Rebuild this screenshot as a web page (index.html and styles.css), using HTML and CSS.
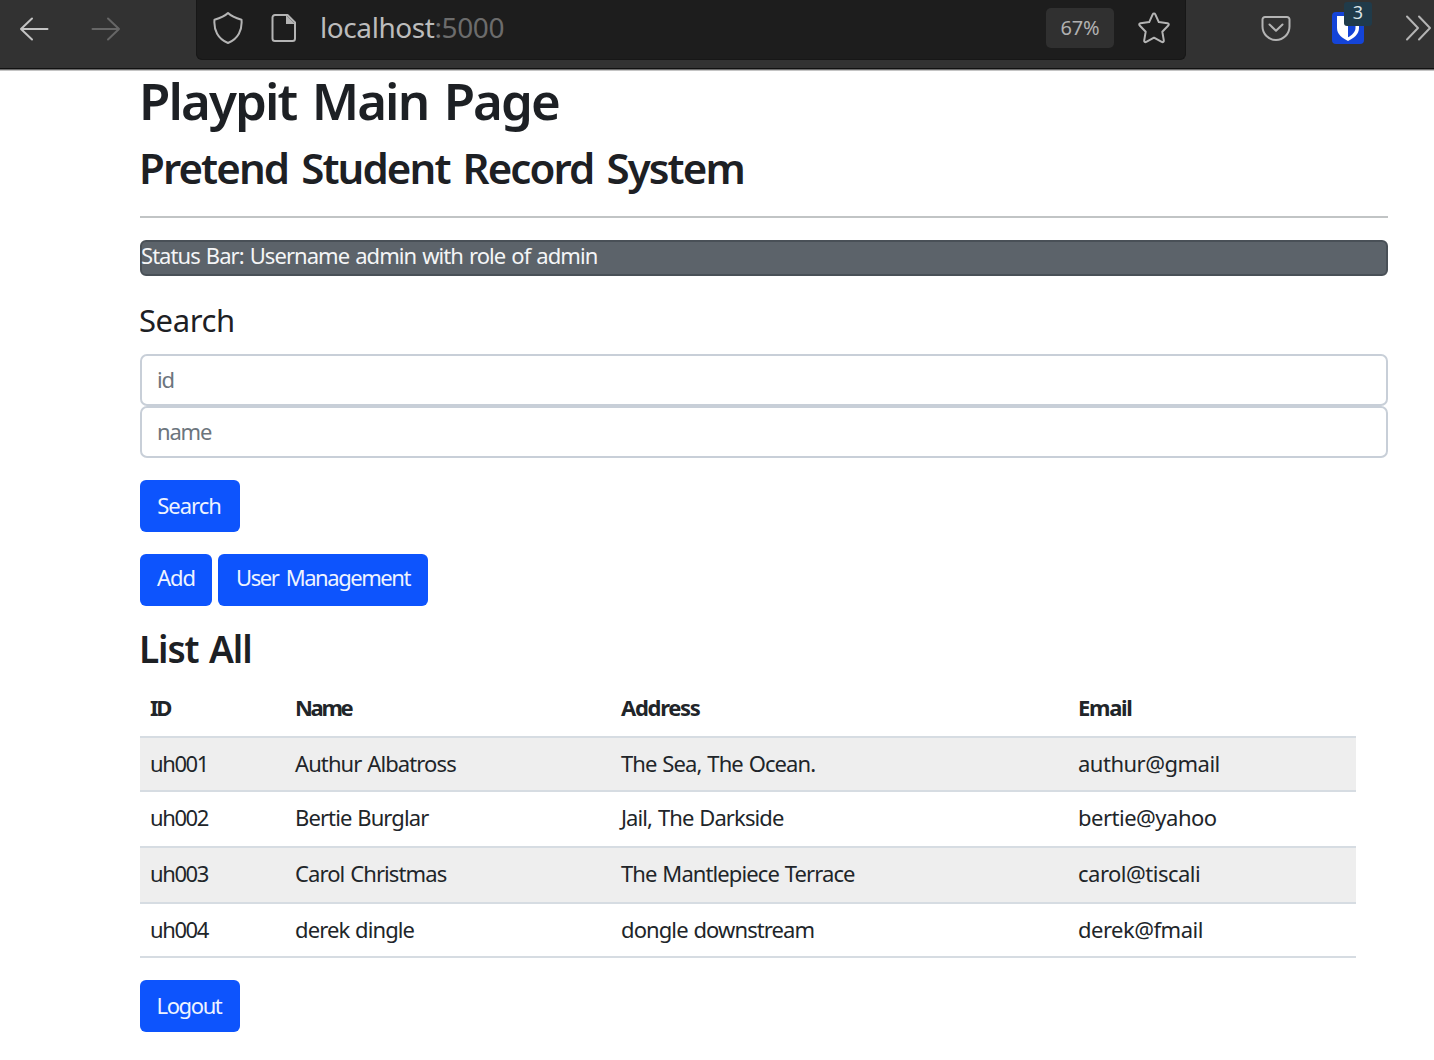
FILE: index.html
```html
<!DOCTYPE html>
<html lang="en">
<head>
<meta charset="utf-8">
<title>Playpit Main Page</title>
<link rel="stylesheet" href="styles.css">
</head>
<body>
<header class="toolbar">
  <svg class="ic back" width="30" height="26" viewBox="0 0 30 26"><path d="M28.500 13H2M13 2.500 2 13l11 10.500"/></svg>
  <svg class="ic fwd" width="30" height="26" viewBox="0 0 30 26"><path d="M1.500 13H28M17 2.500 28 13 17 23.500"/></svg>
  <div class="urlbar">
    <svg class="ic shield" width="30" height="34" viewBox="0 0 30 34"><path d="M15 2c3.500 3.500 7.500 5 13.500 6.700C29.500 19 25 28 15 32 5 28 .5 19 1.500 8.700 7.500 7 11.500 5.500 15 2Z"/></svg>
    <svg class="ic page" width="26" height="30" viewBox="0 0 26 30"><path d="M4 2h12.500L24 9.500V25.500a2.500 2.500 0 0 1-2.500 2.500H4A2.500 2.500 0 0 1 1.500 25.500v-21A2.500 2.500 0 0 1 4 2Z"/><path class="fold" d="M15 2v9h9Z"/></svg>
    <span class="url">localhost<span class="port">:5000</span></span>
    <span class="zoom">67%</span>
    <svg class="ic star" width="34" height="34" viewBox="0 0 34 34"><path d="M17 2.500c.6 0 1 .3 1.300.9l3.500 7.700 8.700 1.100c1.300.2 1.700 1.400.8 2.300l-6 6.200 1.500 8.700c.2 1.300-.9 2.100-2.100 1.500L17 26.700l-7.700 4.200c-1.200.6-2.300-.2-2.100-1.500l1.500-8.700-6-6.200c-.9-.9-.5-2.100.8-2.300l8.700-1.100 3.500-7.700c.3-.6.7-.9 1.300-.9Z"/></svg>
  </div>
  <svg class="ic pocket" width="30" height="28" viewBox="0 0 30 28"><path d="M4 3h22a2.500 2.500 0 0 1 2.500 2.500V12.500a13.500 13.500 0 0 1-27 0V5.500A2.500 2.500 0 0 1 4 3Z"/><path d="m8.500 10.500 6.500 6.300 6.500-6.300"/></svg>
  <div class="ext">
    <svg width="32" height="32" viewBox="0 0 32 32"><rect width="32" height="32" rx="4" fill="#1444d8"/><path d="M5 4h22v12c0 6-5 10-11 13C10 26 5 22 5 16Z" fill="#fff"/><path d="M16 7.500h7.500V16c0 4-3.500 7-7.500 9.300Z" fill="#1444d8"/></svg>
    <span class="badge">3</span>
  </div>
  <svg class="ic more" width="28" height="26" viewBox="0 0 28 26"><path d="M2 1.500 13 13 2 24.500M14 1.500 25 13 14 24.500"/></svg>
</header>
<main class="page-body">
  <h1>Playpit Main Page</h1>
  <h2 class="subtitle">Pretend Student Record System</h2>
  <hr>
  <div class="status">Status Bar: Username admin with role of admin</div>
  <h3>Search</h3>
  <form>
    <input type="text" placeholder="id">
    <input type="text" placeholder="name">
    <button type="button" class="btn search">Search</button>
  </form>
  <div class="actions">
    <button type="button" class="btn add">Add</button>
    <button type="button" class="btn users">User Management</button>
  </div>
  <h2 class="list-title">List All</h2>
  <table>
    <colgroup><col class="c1"><col class="c2"><col class="c3"><col class="c4"></colgroup>
    <thead><tr><th>ID</th><th>Name</th><th>Address</th><th>Email</th></tr></thead>
    <tbody>
      <tr class="short"><td>uh001</td><td>Authur Albatross</td><td>The Sea, The Ocean.</td><td>authur@gmail</td></tr>
      <tr><td>uh002</td><td>Bertie Burglar</td><td>Jail, The Darkside</td><td>bertie@yahoo</td></tr>
      <tr><td>uh003</td><td>Carol Christmas</td><td>The Mantlepiece Terrace</td><td>carol@tiscali</td></tr>
      <tr class="short"><td>uh004</td><td>derek dingle</td><td>dongle downstream</td><td>derek@fmail</td></tr>
    </tbody>
  </table>
  <button type="button" class="btn logout">Logout</button>
</main>
</body>
</html>
```

FILE: styles.css
```css
*{box-sizing:border-box}
body{margin:0;height:1060px;overflow:hidden;background:#fff;color:#212529;font:22px/30px "Noto Sans",sans-serif;letter-spacing:-.9px;word-spacing:1px}
h1,h2,h3{margin:0;color:#1d2024}

.toolbar{display:flex;align-items:flex-start;height:71px;background:#323232;border-bottom:1px solid #c4c4c4;box-shadow:inset 0 -1px #6a6a6a,inset 0 -2px #111}
.ic{flex:none;fill:none;stroke:#b4b4b4;stroke-width:2;stroke-linecap:round;stroke-linejoin:round}
.back{margin:16px 0 0 19px;stroke:#c4c4c4}
.fwd{margin:16px 0 0 42px;stroke:#666}
.urlbar{display:flex;align-items:flex-start;width:990px;height:60px;margin-left:76px;margin-right:-1px;transform:none;margin-left:75px;background:#1d1d1d;border:1px solid #171717;border-top:0;border-radius:0 0 6px 6px}
.shield{margin:11px 0 0 16px}
.page{margin:13px 0 0 28px}
.fold{fill:#b4b4b4;stroke:none}
.url{margin:7px 0 0 23px;font-size:28px;line-height:40px;letter-spacing:-.42px;color:#bcbcbc}
.port{color:#6c6c6c}
.zoom{width:68px;height:40px;margin:8px 0 0 auto;border-radius:5px;background:#303030;color:#b0b0b0;font-size:20px;line-height:40px;text-align:center;letter-spacing:-.2px}
.star{margin:11px 14px 0 23px}
.pocket{margin:14px 0 0 76px}
.ext{position:relative;width:32px;height:32px;margin:12px 0 0 41px}
.ext svg{display:block}
.badge{position:absolute;left:12px;top:-10px;width:28px;height:24px;border-radius:3px;background:#203b4a;color:#dce3e6;font-size:18px;line-height:20px;text-align:center;letter-spacing:0}
.more{margin:15px 0 0 41px}

.page-body{width:1248px;margin:-1px 0 0 140px}
h1{height:60px;font-size:51px;line-height:60px;font-weight:600;letter-spacing:-1.900px;word-spacing:4px;text-indent:-1px}
.subtitle{height:52px;margin-top:11px;font-size:42px;line-height:54px;font-weight:600;letter-spacing:-1.900px;word-spacing:4px;text-indent:-1px}
hr{height:2px;margin:23px 0 22px;border:0;background:#c1c4c5}
.status{height:36px;border:2px solid #495057;border-radius:6px;background:#5c636a;color:#f4f5f6;line-height:27px;letter-spacing:-.950px;word-spacing:1.300px;text-indent:-1px}
h3{margin-top:25px;height:38px;font-size:31px;line-height:38px;font-weight:400;letter-spacing:-.4px;text-indent:-1px}
form{display:flex;flex-direction:column;align-items:flex-start;margin-top:15px}
input{width:100%;height:52px;padding:0 15px 2px;border:2px solid #c8cfd8;border-radius:7px;background:#fff;font:inherit;letter-spacing:-1.200px}
input::placeholder{color:#6c757d;opacity:1}
.btn{display:block;height:52px;padding:0 0 2px;border:0;border-radius:6px;background:#0d54fd;color:#eef3ff;font:inherit;letter-spacing:-1px;text-align:center}
.search,.logout{width:100px}
.search{margin-top:22px;padding-right:2px}
.logout{letter-spacing:-1.400px;padding-right:2px}
.actions{display:flex;gap:6px;margin-top:22px}
.actions .btn{padding-bottom:6px}
.add{width:72px}
.users{width:210px;letter-spacing:-1.450px;word-spacing:3px}
.list-title{margin-top:20px;height:44px;font-size:37px;line-height:45px;font-weight:600;letter-spacing:-1.100px;word-spacing:2px;text-indent:-1px}
table{width:1216px;margin:10px 0 22px;border-collapse:separate;border-spacing:0;table-layout:fixed}
.c1{width:145px}
.c2{width:326px}
.c3{width:457px}
th,td{height:56px;padding:10px 10px 0;border-bottom:2px solid #d6dce2;text-align:left;vertical-align:top}
th{height:58px;padding-top:12px;font-weight:700;letter-spacing:-1.300px}
th:nth-child(-n+2){letter-spacing:-2.300px}
td:first-child{letter-spacing:-1.400px}
td:last-child{letter-spacing:-.5px}
.short td{height:54px}
tbody tr:nth-child(odd){background:#eee}
```
